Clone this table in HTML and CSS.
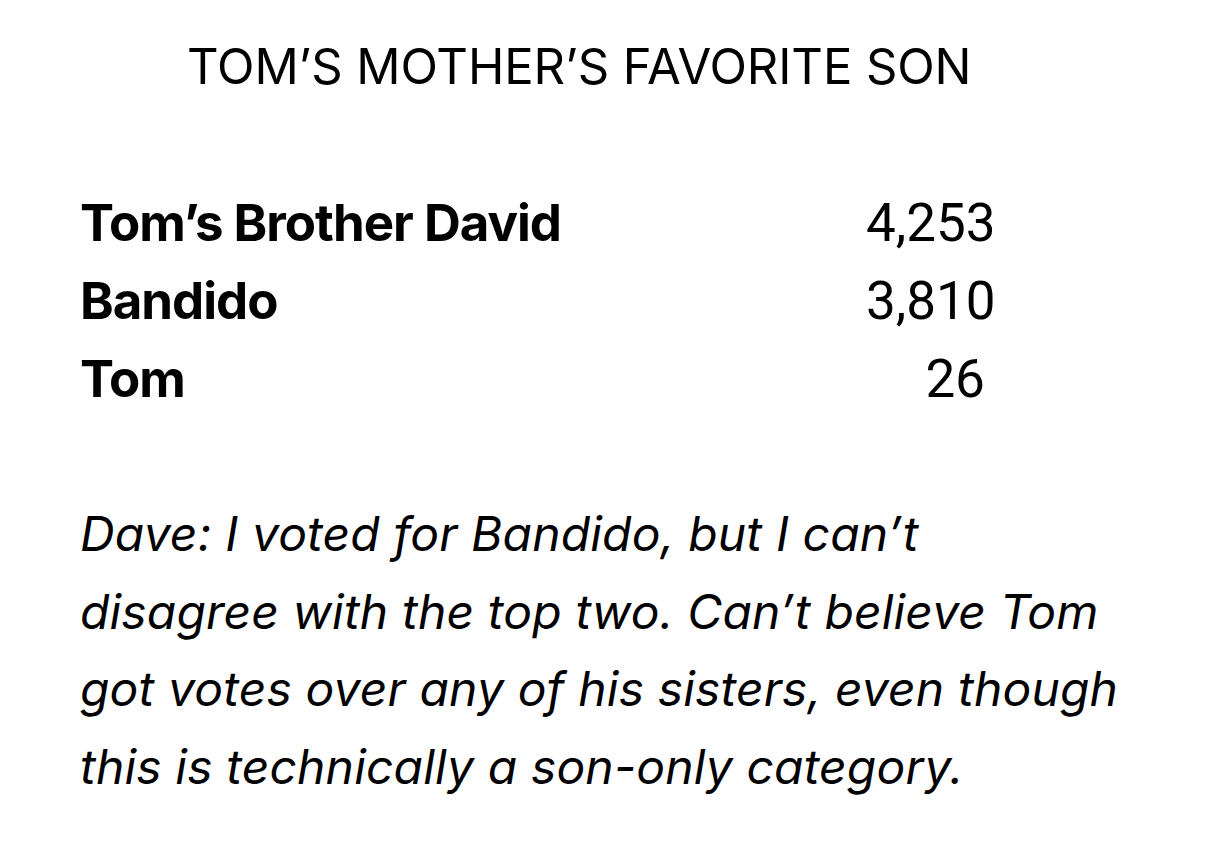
FILE: index.html
```html
<!DOCTYPE html>
<html>
<head>
<meta charset="utf-8">
<link rel="stylesheet" href="styles.css">
</head>
<body>
<main class="page">
  <h1 class="title">TOM’S MOTHER’S FAVORITE SON</h1>
  <div class="results">
    <div class="row"><span class="name">Tom’s Brother David</span><span class="votes">4,253</span></div>
    <div class="row"><span class="name">Bandido</span><span class="votes">3,810</span></div>
    <div class="row"><span class="name">Tom</span><span class="votes">&#8199;&#8199;26</span></div>
  </div>
  <p class="comment">Dave: I voted for Bandido, but I can’t<br>disagree with the top two. Can’t believe Tom<br>got votes over any of his sisters, even though<br>this is technically a son-only category.</p>
</main>
</body>
</html>
```

FILE: styles.css
```css
html, body {
  margin: 0;
  padding: 0;
  background: #ffffff;
}
body {
  font-family: Inter, "Noto Sans", sans-serif;
  color: #000000;
}
.page {
  width: 1206px;
  height: 855px;
  box-sizing: border-box;
  padding: 32px 80px 0 80px;
  overflow: hidden;
}
.title {
  margin: 0;
  padding-left: 107px;
  font-size: 49px;
  font-weight: 400;
  line-height: 70px;
  letter-spacing: -0.1px;
}
.results {
  margin-top: 82px;
}
.row {
  display: grid;
  grid-template-columns: 786px auto;
  line-height: 78px;
}
.name {
  font-size: 51px;
  font-weight: 700;
  letter-spacing: -1px;
}
.votes {
  font-family: Roboto, Inter, sans-serif;
  font-size: 53px;
  font-weight: 400;
  font-variant-numeric: tabular-nums;
}
.comment {
  margin: 77px 0 0 0;
  font-size: 48px;
  font-style: italic;
  line-height: 77.5px;
  letter-spacing: 0.15px;
}
```
